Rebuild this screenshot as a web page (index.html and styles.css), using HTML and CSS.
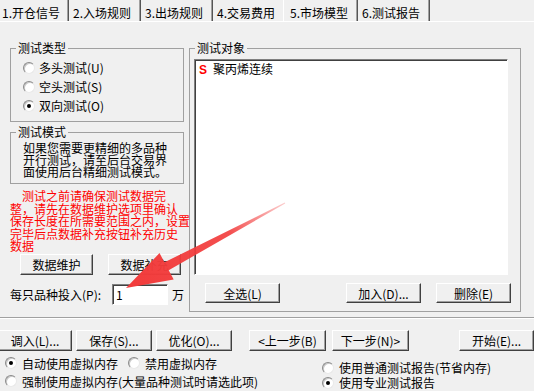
FILE: index.html
```html
<!DOCTYPE html>
<html lang="zh-CN">
<head>
  <meta charset="UTF-8">
  <meta name="viewport" content="width=device-width, initial-scale=1.0">
  <title>市场模型</title>
  <link rel="stylesheet" href="styles.css">
</head>
<body>
  <div class="window">
    <div class="tabs">
      <div class="tab first">1.开仓信号</div>
      <div class="tab">2.入场规则</div>
      <div class="tab">3.出场规则</div>
      <div class="tab">4.交易费用</div>
      <div class="tab active">5.市场模型</div>
      <div class="tab">6.测试报告</div>
    </div>

    <div class="panel">
      <div class="left">
        <fieldset class="group">
          <legend>测试类型</legend>
          <div class="radios">
            <label class="radio"><span class="dot"></span>多头测试(U)</label>
            <label class="radio"><span class="dot"></span>空头测试(S)</label>
            <label class="radio"><span class="dot on"></span>双向测试(O)</label>
          </div>
        </fieldset>

        <fieldset class="group mode">
          <legend>测试模式</legend>
          <p class="mode-text">如果您需要更精细的多品种<br>开行测试，请至后台交易界<br>面使用后台精细测试模式。</p>
        </fieldset>

        <p class="warn">测试之前请确保测试数据完<br>整，请先在数据维护选项里确认<br>保存长度在所需要范围之内，设置<br>完毕后点数据补充按钮补充历史<br>数据</p>

        <div class="btn-row">
          <button class="btn data-btn">数据维护</button>
          <button class="btn data-btn second">数据补充</button>
        </div>

        <div class="invest">
          <span class="invest-label">每只品种投入(P):</span>
          <span class="input">1</span>
          <span class="unit">万</span>
        </div>
      </div>

      <fieldset class="group target">
        <legend>测试对象</legend>
        <div class="list">
          <div class="item"><b class="mark">S</b>聚丙烯连续</div>
        </div>
        <div class="list-btns">
          <button class="btn list-btn">全选(L)</button>
          <button class="btn list-btn add">加入(D)...</button>
          <button class="btn list-btn del">删除(E)</button>
        </div>
      </fieldset>
    </div>

    <div class="sep"></div>

    <div class="actions">
      <div class="act-group">
        <button class="btn act first-act">调入(L)...</button>
        <button class="btn act">保存(S)...</button>
        <button class="btn act">优化(O)...</button>
      </div>
      <div class="act-group steps">
        <button class="btn act step">&lt;上一步(B)</button>
        <button class="btn act step">下一步(N)&gt;</button>
      </div>
      <button class="btn act start">开始(E)...</button>
    </div>

    <div class="options">
      <div class="opt-left">
        <div class="opt-row">
          <label class="radio"><span class="dot on"></span>自动使用虚拟内存</label>
          <label class="radio next"><span class="dot"></span>禁用虚拟内存</label>
        </div>
        <div class="opt-row">
          <label class="radio"><span class="dot"></span>强制使用虚拟内存(大量品种测试时请选此项)</label>
        </div>
      </div>
      <div class="opt-right">
        <label class="radio"><span class="dot"></span>使用普通测试报告(节省内存)</label>
        <label class="radio"><span class="dot on"></span>使用专业测试报告</label>
      </div>
    </div>

    <svg class="arrow" width="534" height="391" viewBox="0 0 534 391">
      <defs>
        <linearGradient id="fade" x1="285" y1="203" x2="126" y2="288" gradientUnits="userSpaceOnUse">
          <stop offset="0" stop-color="#f23b3b" stop-opacity="0.25"/>
          <stop offset="0.35" stop-color="#f23b3b" stop-opacity="0.9"/>
          <stop offset="1" stop-color="#f23b3b" stop-opacity="1"/>
        </linearGradient>
      </defs>
      <polygon fill="url(#fade)" points="284.8,202.6 164.5,262.3 159.5,253.1 126,288 173.7,279.5 168.7,270.3 285.2,203.4"/>
    </svg>
  </div>
</body>
</html>
```

FILE: styles.css
```css
html, body {
  margin: 0;
  padding: 0;
  background-color: #f0f0f0;
  overflow: hidden;
  font-family: "Noto Sans CJK SC", "Noto Sans", sans-serif;
  font-size: 12px;
  color: #000;
}

.window {
  position: relative;
  width: 534px;
  height: 391px;
}

/* tabs */
.tabs {
  display: flex;
  height: 21px;
  border-bottom: 1px solid #fff;
}

.tab {
  box-sizing: border-box;
  width: 72px;
  height: 21px;
  padding: 4px 0 0 4px;
  line-height: 17px;
  background-color: #f0f0f0;
  border-right: 1px solid #555;
  box-shadow: inset -1px 0 #a0a0a0;
  white-space: nowrap;
}

.tab.first {
  width: 69px;
  padding-left: 2px;
}

.tab.active {
  width: 75px;
  margin-left: -2px;
  padding-left: 6px;
  border-left: 1px solid #fff;
}

/* main panel */
.panel {
  display: flex;
  height: 295px;
  box-sizing: border-box;
  padding-top: 20px;
}

.left {
  width: 174px;
  margin-left: 10px;
}

.group {
  margin: 0;
  padding: 0;
  min-width: 0;
  border: 1px solid #a0a0a0;
}

.group legend {
  margin-left: 5px;
  padding: 0 2px;
  line-height: 12px;
}

.radios {
  padding: 4px 0 6px 12px;
}

.radio {
  display: flex;
  align-items: center;
  height: 19px;
  white-space: nowrap;
}

.dot {
  box-sizing: border-box;
  display: flex;
  align-items: center;
  justify-content: center;
  flex-shrink: 0;
  width: 12px;
  height: 12px;
  margin-right: 4px;
  border-radius: 50%;
  border: 1px solid;
  border-color: #8a8a8a #e8e8e8 #e8e8e8 #8a8a8a;
  background-color: #fff;
  box-shadow: inset 1px 1px #c8c8c8;
}

.dot.on::after {
  content: "";
  width: 4px;
  height: 4px;
  border-radius: 50%;
  background-color: #000;
}

.mode {
  margin-top: 4px;
}

.mode-text {
  margin: 0;
  padding: 4px 0 5px 12px;
  line-height: 12px;
  white-space: nowrap;
}

.warn {
  margin: 6px 0 0 0;
  line-height: 12.5px;
  color: #f00;
  text-indent: 12px;
  white-space: nowrap;
}

/* buttons */
.btn {
  box-sizing: border-box;
  height: 21px;
  padding: 0;
  font: inherit;
  color: #000;
  background-color: #f0f0f0;
  border: 1px solid;
  border-color: #fff #404040 #404040 #fff;
  box-shadow: inset -1px -1px #a0a0a0;
  white-space: nowrap;
}

.btn-row {
  display: flex;
  margin-top: 1px;
}

.data-btn {
  width: 73px;
  margin-left: 10px;
}

.data-btn.second {
  margin-left: 15px;
}

.invest {
  display: flex;
  align-items: center;
  height: 21px;
  margin-top: 9px;
}

.invest-label {
  width: 102px;
  white-space: nowrap;
}

.input {
  box-sizing: border-box;
  width: 56px;
  height: 21px;
  padding: 2px 0 0 3px;
  line-height: 15px;
  background-color: #fff;
  border: 1px solid;
  border-color: #808080 #fff #fff #808080;
  box-shadow: inset 1px 1px #404040;
}

.unit {
  margin-left: 4px;
}

/* test objects */
.target {
  box-sizing: border-box;
  width: 332px;
  height: 270px;
  margin-left: 5px;
}

.list {
  box-sizing: border-box;
  width: 314px;
  height: 216px;
  margin: 5px 0 0 4px;
  padding: 2px 0 0 4px;
  background-color: #fff;
  border: 1px solid;
  border-color: #808080 #fff #fff #808080;
  box-shadow: inset 1px 1px #404040;
}

.item {
  line-height: 14px;
  white-space: nowrap;
}

.mark {
  margin-right: 6px;
  color: #f00;
  font-family: "Liberation Sans", sans-serif;
  font-weight: bold;
}

.list-btns {
  display: flex;
  margin-top: 8px;
}

.list-btn {
  width: 75px;
  height: 20px;
  margin-left: 15px;
}

.list-btn.add {
  margin-left: 66px;
}

.list-btn.del {
  margin-left: 15px;
}

.sep {
  height: 1px;
  background-color: #a0a0a0;
  border-bottom: 1px solid #fff;
}

/* bottom actions */
.actions {
  display: flex;
  margin-top: 11px;
}

.act-group {
  display: flex;
  gap: 4px;
}

.act {
  width: 76px;
}

.act.first-act {
  width: 74px;
  margin-left: -2px;
}

.steps {
  gap: 6px;
  margin-left: 17px;
}

.act.step {
  width: 77px;
}

.act.start {
  width: 75px;
  margin-left: auto;
}

.options {
  display: grid;
  grid-template-columns: 317px 1fr;
  padding: 4px 0 0 5px;
}

.opt-row {
  display: flex;
  margin-bottom: 2px;
}

.opt-row .radio {
  height: 16px;
}

.opt-row .dot,
.opt-right .dot {
  margin-right: 5px;
}

.opt-row .radio.next {
  margin-left: 10px;
}

.opt-right {
  padding-top: 5px;
}

.opt-right .radio {
  height: 15px;
}

.arrow {
  position: absolute;
  top: 0;
  left: 0;
  pointer-events: none;
}
```
